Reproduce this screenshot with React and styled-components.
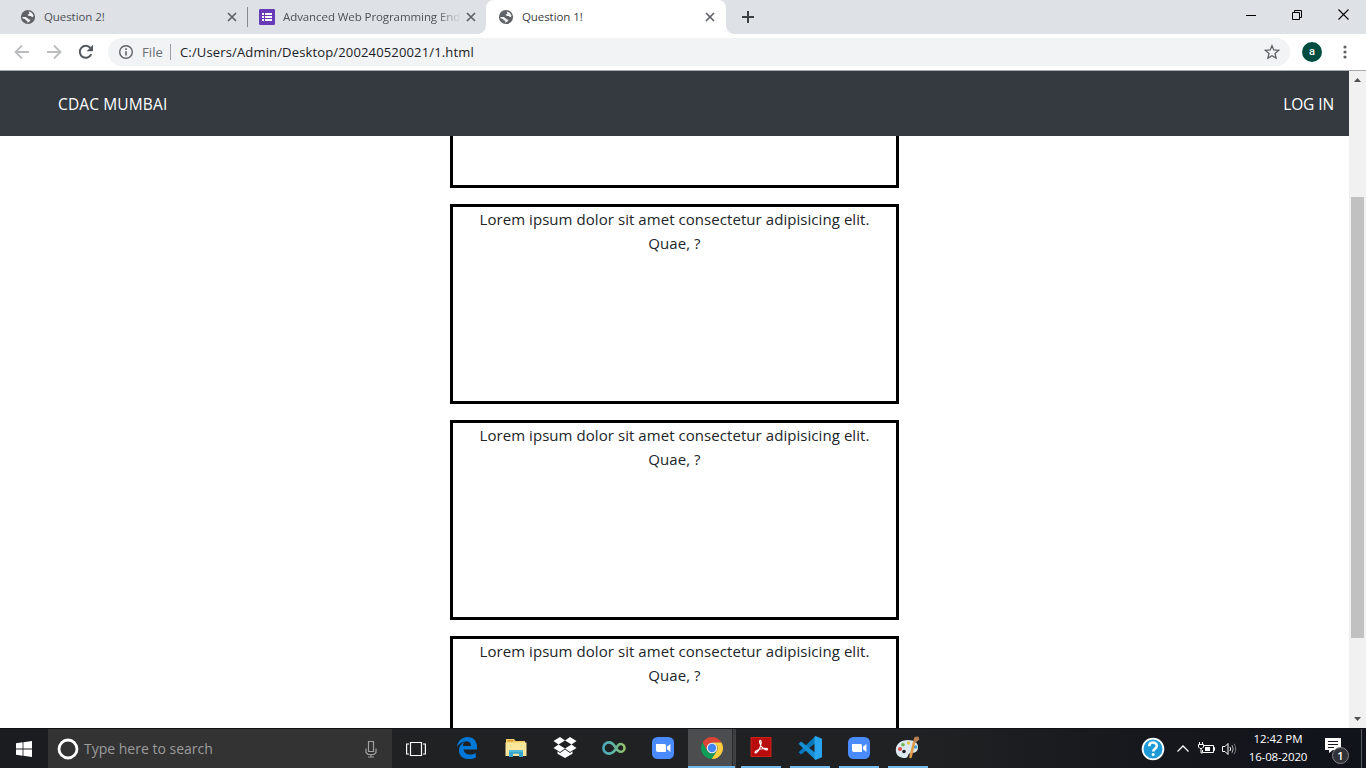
import React from "react";
import styled, { createGlobalStyle } from "styled-components";

const GlobalStyle = createGlobalStyle`
  * { box-sizing: border-box; }
  body { margin: 0; overflow: hidden; background: #fff; font-family: "Open Sans", "Noto Sans", sans-serif; }
  svg { display: block; flex: none; }
`;

const Screen = styled.div`
  width: 1366px;
  height: 768px;
  display: flex;
  flex-direction: column;
  overflow: hidden;
`;

/* Tab strip */
const TabStrip = styled.div`
  height: 34px;
  flex: none;
  background: #dee1e6;
  display: flex;
  align-items: stretch;
`;
const Tab = styled.div`
  position: relative;
  width: ${(p) => p.$width}px;
  display: flex;
  align-items: center;
  padding: 0 ${(p) => (p.$active ? 11 : 10)}px 0 ${(p) => p.$left}px;
  background: ${(p) => (p.$active ? "#fff" : "transparent")};
  border-radius: 8px 8px 0 0;
  ${(p) =>
    p.$active &&
    `&::before, &::after {
      content: "";
      position: absolute;
      bottom: 0;
      width: 8px;
      height: 8px;
    }
    &::before { left: -8px; background: radial-gradient(circle at 0 0, transparent 7.5px, #fff 8px); }
    &::after { right: -8px; background: radial-gradient(circle at 100% 0, transparent 7.5px, #fff 8px); }`}
`;
const TabTitle = styled.span`
  flex: 1;
  margin-left: 8px;
  margin-right: 4px;
  white-space: nowrap;
  font-size: 11.5px;
  line-height: 18px;
  letter-spacing: -0.08px;
  color: ${(p) => (p.$active ? "#3c4043" : "#4d5156")};
  ${(p) => p.$fade && "mask-image: linear-gradient(90deg, #000 154px, transparent 178px);"}
`;
const Divider = styled.i`
  width: 1px;
  height: 20px;
  margin-top: 7px;
  background: #85888c;
`;
const NewTab = styled.div`
  display: flex;
  align-items: center;
  padding-left: 16px;
`;
const WindowButtons = styled.div`
  margin-left: auto;
  display: flex;
  height: 29px;
`;
const WindowButton = styled.div`
  width: 46px;
  display: flex;
  align-items: center;
  justify-content: center;
`;

/* Toolbar */
const Toolbar = styled.div`
  height: 37px;
  flex: none;
  display: flex;
  align-items: center;
  background: #fff;
  border-bottom: 1px solid #a9abad;
  padding-left: 12px;
`;
const NavIcons = styled.div`
  display: flex;
  gap: 12px;
`;
const AddressBar = styled.div`
  width: 1182px;
  height: 28px;
  margin-left: 12px;
  padding: 0 10px 0 8px;
  border-radius: 14px;
  background: #f1f3f4;
  display: flex;
  align-items: center;
  font-size: 13px;
  line-height: 20px;
  color: #202124;
`;
const Scheme = styled.span`
  margin-left: 6px;
  width: 28px;
  letter-spacing: 0.1px;
  color: #6b6f73;
`;
const SchemeDivider = styled.i`
  width: 1px;
  height: 16px;
  margin-right: 9px;
  background: #9aa0a6;
`;
const Url = styled.span`
  flex: 1;
  letter-spacing: 0.15px;
`;
const Avatar = styled.div`
  width: 20px;
  height: 20px;
  margin: 0 21px 0 12px;
  border-radius: 50%;
  background: #004d40;
  color: #fff;
  font: 500 11px/19px Roboto, sans-serif;
  text-align: center;
`;

/* Page */
const Viewport = styled.div`
  height: 657px;
  flex: none;
  display: flex;
`;
const Page = styled.main`
  width: 1349px;
  display: flex;
  flex-direction: column;
  overflow: hidden;
`;
const Navbar = styled.nav`
  height: 65px;
  flex: none;
  display: flex;
  align-items: center;
  justify-content: space-between;
  padding: 0 15px 0 58px;
  background: #343a40;
  color: #fff;
  font-size: 15.5px;
`;
const NavLink = styled.span`
  letter-spacing: ${(p) => p.$spacing}px;
`;
const CardList = styled.section`
  flex: 1;
  min-height: 0;
  display: flex;
  flex-direction: column;
  align-items: center;
  gap: 16px;
  overflow: hidden;
`;
const Card = styled.article`
  width: 449px;
  height: ${(p) => (p.$clipped ? 52 : 200)}px;
  flex: none;
  border: 3px solid #000;
  ${(p) => p.$clipped && "border-top: 0;"}
  font-size: 15px;
  line-height: 24px;
  color: #212529;
  text-align: center;
`;
const CardLine = styled.div`
  white-space: nowrap;
  letter-spacing: 0.06px;
`;
const Scrollbar = styled.div`
  width: 17px;
  display: flex;
  flex-direction: column;
  align-items: center;
  justify-content: space-between;
  background: #f1f1f1;
`;
const Thumb = styled.div`
  width: 13px;
  height: 441px;
  flex: none;
  margin: 109px 0 73px;
  background: #c1c1c1;
`;

/* Taskbar */
const Taskbar = styled.footer`
  height: 40px;
  flex: none;
  display: flex;
  background: linear-gradient(90deg, #1b1c20 0, #202123 400px, #202122 930px, #16181d 1130px, #10131a 1366px);
  border-top: 1px solid #101114;
  color: #fff;
`;
const StartButton = styled.div`
  width: 48px;
  display: flex;
  align-items: center;
  justify-content: center;
`;
const SearchBox = styled.div`
  width: 344px;
  display: flex;
  align-items: center;
  padding: 0 14px 0 9px;
  background: #333334;
  color: #9b9b9b;
  font-size: 14px;
`;
const SearchText = styled.span`
  flex: 1;
  margin-left: 5px;
`;
const TaskView = styled.div`
  width: 50px;
  display: flex;
  align-items: center;
  padding-left: 14px;
`;
const AppButton = styled.div`
  width: 49px;
  display: flex;
  flex-direction: column;
  align-items: center;
  justify-content: space-between;
  padding-top: 7px;
  ${(p) =>
    p.$active &&
    "background: linear-gradient(90deg, transparent 1px, #4c4d4e 1px 45px, #292a2b 45px 46px, #3f4041 46px 49px);"}
`;
const Underline = styled.i`
  width: ${(p) => (p.$wide ? 47 : 40)}px;
  height: 2px;
  background: ${(p) => (p.$on ? "#76b9ed" : "transparent")};
`;
const Tray = styled.div`
  margin-left: auto;
  display: flex;
  align-items: center;
`;
const TrayIcons = styled.div`
  display: flex;
  align-items: center;
  gap: ${(p) => p.$gap}px;
  margin-right: ${(p) => p.$after}px;
`;
const Clock = styled.div`
  width: 70px;
  padding-bottom: 2px;
  text-align: center;
  font-size: 11.5px;
  line-height: 18px;
  white-space: nowrap;
`;
const ClockLine = styled.div`
  letter-spacing: ${(p) => p.$spacing}px;
`;
const Notifications = styled.div`
  position: relative;
  width: 26px;
  height: 28px;
  margin-left: 11px;
`;
const CountBadge = styled.b`
  position: absolute;
  left: 8px;
  top: 12px;
  width: 17px;
  height: 17px;
  border: 1px solid #85878a;
  border-radius: 50%;
  background: #303238;
  font-size: 11px;
  line-height: 15px;
  font-weight: 600;
  text-align: center;
`;
const DesktopEdge = styled.i`
  width: 1px;
  height: 39px;
  margin: 0 4px 0 11px;
  background: #5a5c60;
`;

const Globe = () => (
  <svg width="16" height="16" viewBox="0 0 16 16">
    <circle cx="8" cy="8" r="7.1" fill="#5f6368" />
    <path d="M8.6 2.2 12 3.9l1.7 3-1.4 1.3-1.6-1.3H8.9L7.5 5.8l1.9-1.1-.4-1.2zM2.3 8.1l3.5-.1 2.1 1.4 1 1.2 1.7.2-.9 1.4-2.3 1.5-.2-1.9-1.7-.6-.4-1.3-2.4-.3z" fill="#f3f4f6" />
  </svg>
);
const FormsIcon = () => (
  <svg width="16" height="16" viewBox="0 0 16 16">
    <rect width="16" height="16" rx="1.2" fill="#673ab7" />
    <path d="M3 4h2v2H3zm0 3h2v2H3zm0 3h2v2H3zm3-6h7v2H6zm0 3h7v2H6zm0 3h7v2H6z" fill="#fff" />
  </svg>
);
const Close = () => (
  <svg width="10" height="10" viewBox="0 0 10 10" stroke="#5f6368" strokeWidth="1.7">
    <path d="M1 1l8 8M9 1 1 9" />
  </svg>
);
const Arrow = ({ flip }) => (
  <svg width="20" height="20" viewBox="0 0 20 20" fill="none" stroke="#babcbe" strokeWidth="1.8">
    <path d={flip ? "M3 10h13M10 3.5l6.5 6.5-6.5 6.5" : "M17 10H4M10 3.5 3.5 10l6.5 6.5"} />
  </svg>
);
const Reload = () => (
  <svg width="20" height="20" viewBox="0 0 20 20">
    <path d="M15.3 12.2a6 6 0 1 1-.9-6.3" fill="none" stroke="#54585c" strokeWidth="2" />
    <path d="M17 2.8v6.4h-6.4z" fill="#54585c" />
  </svg>
);
const Info = () => (
  <svg width="20" height="20" viewBox="0 0 20 20">
    <circle cx="10" cy="10" r="6.3" fill="none" stroke="#5f6368" strokeWidth="1.4" />
    <path d="M9.2 9.2h1.6v4.3H9.2zm0-2.9h1.6v1.6H9.2z" fill="#5f6368" />
  </svg>
);
const Star = () => (
  <svg width="16" height="16" viewBox="0 0 16 16">
    <path d="M8 1.7l1.8 4.3 4.8.4-3.6 3.1 1.1 4.6L8 11.7l-4.1 2.4L5 9.5 1.4 6.4l4.8-.4z" fill="none" stroke="#5f6368" strokeWidth="1.3" />
  </svg>
);
const Dots = () => (
  <svg width="4" height="14" viewBox="0 0 4 14" fill="#5f6368">
    <circle cx="2" cy="2" r="1.6" />
    <circle cx="2" cy="7" r="1.6" />
    <circle cx="2" cy="12" r="1.6" />
  </svg>
);
const ScrollArrow = ({ down }) => (
  <svg width="17" height="17" viewBox="0 0 17 17">
    <path d={down ? "M5 6h7L8.5 10z" : "M5 11h7L8.5 7z"} fill="#505050" />
  </svg>
);

const Edge = () => (
  <svg width="24" height="24" viewBox="0 0 24 24">
    <path d="M2 10.8C2.6 5.3 6.7 1 12.7 1 18.4 1 22 5 22 11v2.5H8.7c.2 3.3 3.1 5 6.3 5 2.2 0 4.2-.6 5.8-1.6v4.7c-2 1-4.4 1.5-7 1.5-6 0-9.9-3.5-9.9-8.6 0-4 2.2-6.8 5.7-8.5-1 1.2-1.5 2.5-1.7 4H16c0-2.8-1.6-4.7-4.6-4.7-3.8 0-7.1 2.2-9.4 5.5z" fill="#0078d7" />
  </svg>
);
const Explorer = () => (
  <svg width="24" height="24" viewBox="0 0 24 24">
    <path d="M2 3h8l1.5 2H21v14H2z" fill="#f3cf68" />
    <path d="M3.5 4h6v1.5h-6z" fill="#d79d35" />
    <path d="M1.5 6.5h21V20h-21z" fill="#fbe69b" />
    <path d="M5 21v-7h14v7h-4v-3.3H9V21z" fill="#38a7cf" />
    <path d="M5 14h14v2H5z" fill="#51bad8" />
  </svg>
);
const Dropbox = () => (
  <svg width="24" height="24" viewBox="0 0 24 24" fill="#fff">
    <path d="M7 1l5 3.5-6.5 4L.5 5zM17 1l-5 3.5 6.5 4 5-3.5zM.5 12l5-3.5 6.5 4-5 3.5zM23.5 12l-5-3.5-6.5 4 5 3.5zM12 13.4l5 3.5 2.5-1.6v2.4L12 22l-7.5-4.3v-2.4L7 16.9z" />
  </svg>
);
const Infinity = () => (
  <svg width="24" height="24" viewBox="0 0 24 24">
    <defs>
      <linearGradient id="loop" gradientUnits="userSpaceOnUse" x1="0" x2="24" y1="0" y2="0">
        <stop offset="0" stopColor="#45a8bd" />
        <stop offset=".5" stopColor="#62b6a2" />
        <stop offset="1" stopColor="#9bc463" />
      </linearGradient>
    </defs>
    <path d="M14 12.8C12 16 10 17.6 7 17.6A5.6 5.6 0 0 1 7 6.4c3 0 4.6 2 6.4 4.8 1.8 3 3 4.6 5.2 4.6a3.9 3.9 0 0 0 0-7.8c-2.2 0-3.4 1.8-4.6 4.8z" fill="none" stroke="url(#loop)" strokeWidth="2.6" />
  </svg>
);
const ZoomApp = () => (
  <svg width="24" height="24" viewBox="0 0 24 24">
    <rect x="1" y="1" width="22" height="22" rx="5.5" fill="#4a8cff" />
    <path d="M5 8h8.3c1 0 1.7.7 1.7 1.7V16H7c-1.2 0-2-.8-2-2zM16 10.8 19.4 8v8L16 13.3z" fill="#fff" />
  </svg>
);
const Chrome = () => (
  <svg width="24" height="24" viewBox="0 0 24 24">
    <path d="M2.5 6.5A11 11 0 0 1 21.5 6.5H12L7.2 14.7z" fill="#db4437" />
    <path d="M21.5 6.5A11 11 0 0 1 11.5 23l5.3-8.2a5.5 5.5 0 0 0 0-5.5L12 6.5z" fill="#ffcd40" />
    <path d="M2.5 6.5 7.2 14.8c1 1.7 3 2.7 4.8 2.7l4.5-2.1L11.5 23A11 11 0 0 1 2.5 6.5z" fill="#0f9d58" />
    <circle cx="12" cy="12" r="5.3" fill="#f1f1f1" />
    <circle cx="12" cy="12" r="4.2" fill="#4285f4" />
  </svg>
);
const Acrobat = () => (
  <svg width="24" height="24" viewBox="0 0 24 24">
    <rect x="2" y="1.5" width="20" height="19" fill="#b90c0c" stroke="#e0281f" strokeWidth=".8" />
    <path d="M11 4.5c1.6-.4 1.5 3 .2 6.4-1.3 3.4-3.6 6.6-4.8 6-1.2-.8 1.4-2.9 5-3.9 3.6-1 7.3-1 7.2.2-.1 1.4-3.4.3-5.6-2.1-2-2.2-3-6.2-2-6.6z" fill="none" stroke="#fff" strokeWidth="1.2" />
  </svg>
);
const Code = () => (
  <svg width="24" height="24" viewBox="0 0 24 24">
    <path d="M17.5 7 3.2 18.4.5 16.2 17.5 0z" fill="#0879bd" />
    <path d="M17.5 17 3.2 5.6.5 7.8 17.5 24z" fill="#168fd4" />
    <path d="M17.5 0 24 2.8v18.4L17.5 24l-1-1V1z" fill="#28a5ee" />
  </svg>
);
const Paint = () => (
  <svg width="25" height="24" viewBox="0 0 25 24">
    <path d="M13 4C6 4 .8 8 .8 14S5.4 22 10 22c4-.1 2.1-3.9 4.9-4.8 3-.8 7 .4 8-4.4C24.2 7.1 19 4 13 4z" fill="#dce9ef" />
    <circle cx="5" cy="13" r="2" fill="#de504a" />
    <circle cx="8" cy="8.8" r="1.8" fill="#6fb353" />
    <circle cx="13.5" cy="7" r="1.7" fill="#e5c54b" />
    <circle cx="20.5" cy="11" r="1.8" fill="#459ed1" />
    <circle cx="9" cy="15.5" r="1.8" fill="#202122" />
    <path d="M18 5.6 19.5 1l4-.5.8 3-4 3.5z" fill="#b98054" />
    <path d="m18 5.6 2.3 1.4-3.5 14.5c-1.7 1.8-3 .6-2.3-2z" fill="#df9a46" />
  </svg>
);

const apps = [
  { icon: Edge },
  { icon: Explorer },
  { icon: Dropbox },
  { icon: Infinity },
  { icon: ZoomApp },
  { icon: Chrome, active: true, running: true },
  { icon: Acrobat, running: true },
  { icon: Code, running: true },
  { icon: ZoomApp, running: true },
  { icon: Paint, running: true },
];

export default function App() {
  return (
    <Screen>
      <GlobalStyle />
      <TabStrip>
        <Tab $width={247} $left={20}>
          <Globe />
          <TabTitle>Question 2!</TabTitle>
          <Close />
        </Tab>
        <Divider />
        <Tab $width={238} $left={11}>
          <FormsIcon />
          <TabTitle $fade>Advanced Web Programming End</TabTitle>
          <Close />
        </Tab>
        <Tab $width={240} $left={12} $active>
          <Globe />
          <TabTitle $active>Question 1!</TabTitle>
          <Close />
        </Tab>
        <NewTab>
          <svg width="12" height="12" viewBox="0 0 12 12" stroke="#3c4043" strokeWidth="2">
            <path d="M6 0v12M0 6h12" />
          </svg>
        </NewTab>
        <WindowButtons>
          <WindowButton>
            <svg width="10" height="10" viewBox="0 0 10 10"><path d="M0 5h10v1H0z" /></svg>
          </WindowButton>
          <WindowButton>
            <svg width="10" height="10" viewBox="0 0 10 10" fill="none" stroke="#000"><path d="M.5 2.5h7v7h-7zM2.5 2V.5h7v7H8" /></svg>
          </WindowButton>
          <WindowButton>
            <svg width="11" height="11" viewBox="0 0 11 11" stroke="#000" strokeWidth="1.1"><path d="M.5.5l10 10m0-10-10 10" /></svg>
          </WindowButton>
        </WindowButtons>
      </TabStrip>

      <Toolbar>
        <NavIcons>
          <Arrow />
          <Arrow flip />
          <Reload />
        </NavIcons>
        <AddressBar>
          <Info />
          <Scheme>File</Scheme>
          <SchemeDivider />
          <Url>C:/Users/Admin/Desktop/200240520021/1.html</Url>
          <Star />
        </AddressBar>
        <Avatar>a</Avatar>
        <Dots />
      </Toolbar>

      <Viewport>
        <Page>
          <Navbar>
            <NavLink $spacing={0.13}>CDAC MUMBAI</NavLink>
            <NavLink $spacing={-0.1}>LOG IN</NavLink>
          </Navbar>
          <CardList>
            <Card $clipped />
            {[1, 2, 3].map((n) => (
              <Card key={n}>
                <CardLine>Lorem ipsum dolor sit amet consectetur adipisicing elit.</CardLine>
                <CardLine>Quae, ?</CardLine>
              </Card>
            ))}
          </CardList>
        </Page>
        <Scrollbar>
          <ScrollArrow />
          <Thumb />
          <ScrollArrow down />
        </Scrollbar>
      </Viewport>

      <Taskbar>
        <StartButton>
          <svg width="16" height="16" viewBox="0 0 16 16" fill="#fff">
            <path d="M0 2.2 6.6 1.3v6.2H0zM7.4 1.2 16 0v7.5H7.4zM0 8.4h6.6v6.3L0 13.8zM7.4 8.4H16V16l-8.6-1.2z" />
          </svg>
        </StartButton>
        <SearchBox>
          <svg width="22" height="22" viewBox="0 0 22 22">
            <circle cx="11" cy="11" r="9" fill="none" stroke="#fff" strokeWidth="2.8" />
          </svg>
          <SearchText>Type here to search</SearchText>
          <svg width="14" height="18" viewBox="0 0 14 18" fill="none" stroke="#a0a0a0" strokeWidth="1.2">
            <path d="M4.5 1.5h5v10h-5zM2 8.5v4l2 2h6l2-2v-4M7 14.5V17M4 17h6" />
          </svg>
        </SearchBox>
        <TaskView>
          <svg width="20" height="16" viewBox="0 0 20 16" fill="none" stroke="#fff" strokeWidth="1.2">
            <path d="M4.5 1.5h11v13h-11zM3 3H.6v10H3M17 3h2.4v10H17" />
          </svg>
        </TaskView>
        {apps.map(({ icon: Icon, active, running }, i) => (
          <AppButton key={i} $active={active}>
            <Icon />
            <Underline $on={running} $wide={active} />
          </AppButton>
        ))}
        <Tray>
          <TrayIcons $gap={8} $after={4}>
            <svg width="24" height="24" viewBox="0 0 24 24">
              <circle cx="12" cy="12" r="10.4" fill="#1e9bd7" stroke="#fff" strokeWidth="1.8" />
              <path d="M8.2 9.2c.1-5 7.8-4.6 7.6-.2 0 2.8-3.5 2.8-3.6 5.5" fill="none" stroke="#fff" strokeWidth="2.5" />
              <circle cx="12.1" cy="17.5" r="1.5" fill="#fff" />
            </svg>
            <svg width="20" height="16" viewBox="0 0 20 16" fill="none" stroke="#fff" strokeWidth="1.3">
              <path d="M4.5 10.5 10 5l5.5 5.5" />
            </svg>
          </TrayIcons>
          <TrayIcons $gap={3} $after={5}>
            <svg width="19" height="16" viewBox="0 0 19 16" fill="none" stroke="#fff">
              <path d="M7 4.5h9.5v7H5.5V9M16.5 6.5h1v3h-1M2.5 1v2.5m3-2.5v2.5M1.5 3.5h5V6L5 7.5H3L1.5 6zM4 7.5V12h1.5" />
              <path d="M8 6h5v4H8z" fill="#fff" stroke="none" />
            </svg>
            <svg width="19" height="16" viewBox="0 0 19 16" fill="none" stroke="#fff">
              <path d="M3.5 5.5H6l3-3v11l-3-3H3.5zM11 6q1.4 2 0 4" />
              <path d="M13 4.2q2.5 3.8 0 7.6" stroke="#b5b6b8" />
              <path d="M15 2.8q3.5 5.2 0 10.4" stroke="#777a80" />
            </svg>
          </TrayIcons>
          <Clock>
            <ClockLine $spacing={-0.1}>12:42 PM</ClockLine>
            <ClockLine $spacing={-0.15}>16-08-2020</ClockLine>
          </Clock>
          <Notifications>
            <svg width="18" height="18" viewBox="0 0 18 18">
              <path d="M1 3h16v12H9l-4 3v-3H1z" fill="#fff" />
              <path d="M4 6h10v1H4zm0 3h10v1H4zm0 3h6v1H4z" fill="#15181e" />
            </svg>
            <CountBadge>1</CountBadge>
          </Notifications>
          <DesktopEdge />
        </Tray>
      </Taskbar>
    </Screen>
  );
}
